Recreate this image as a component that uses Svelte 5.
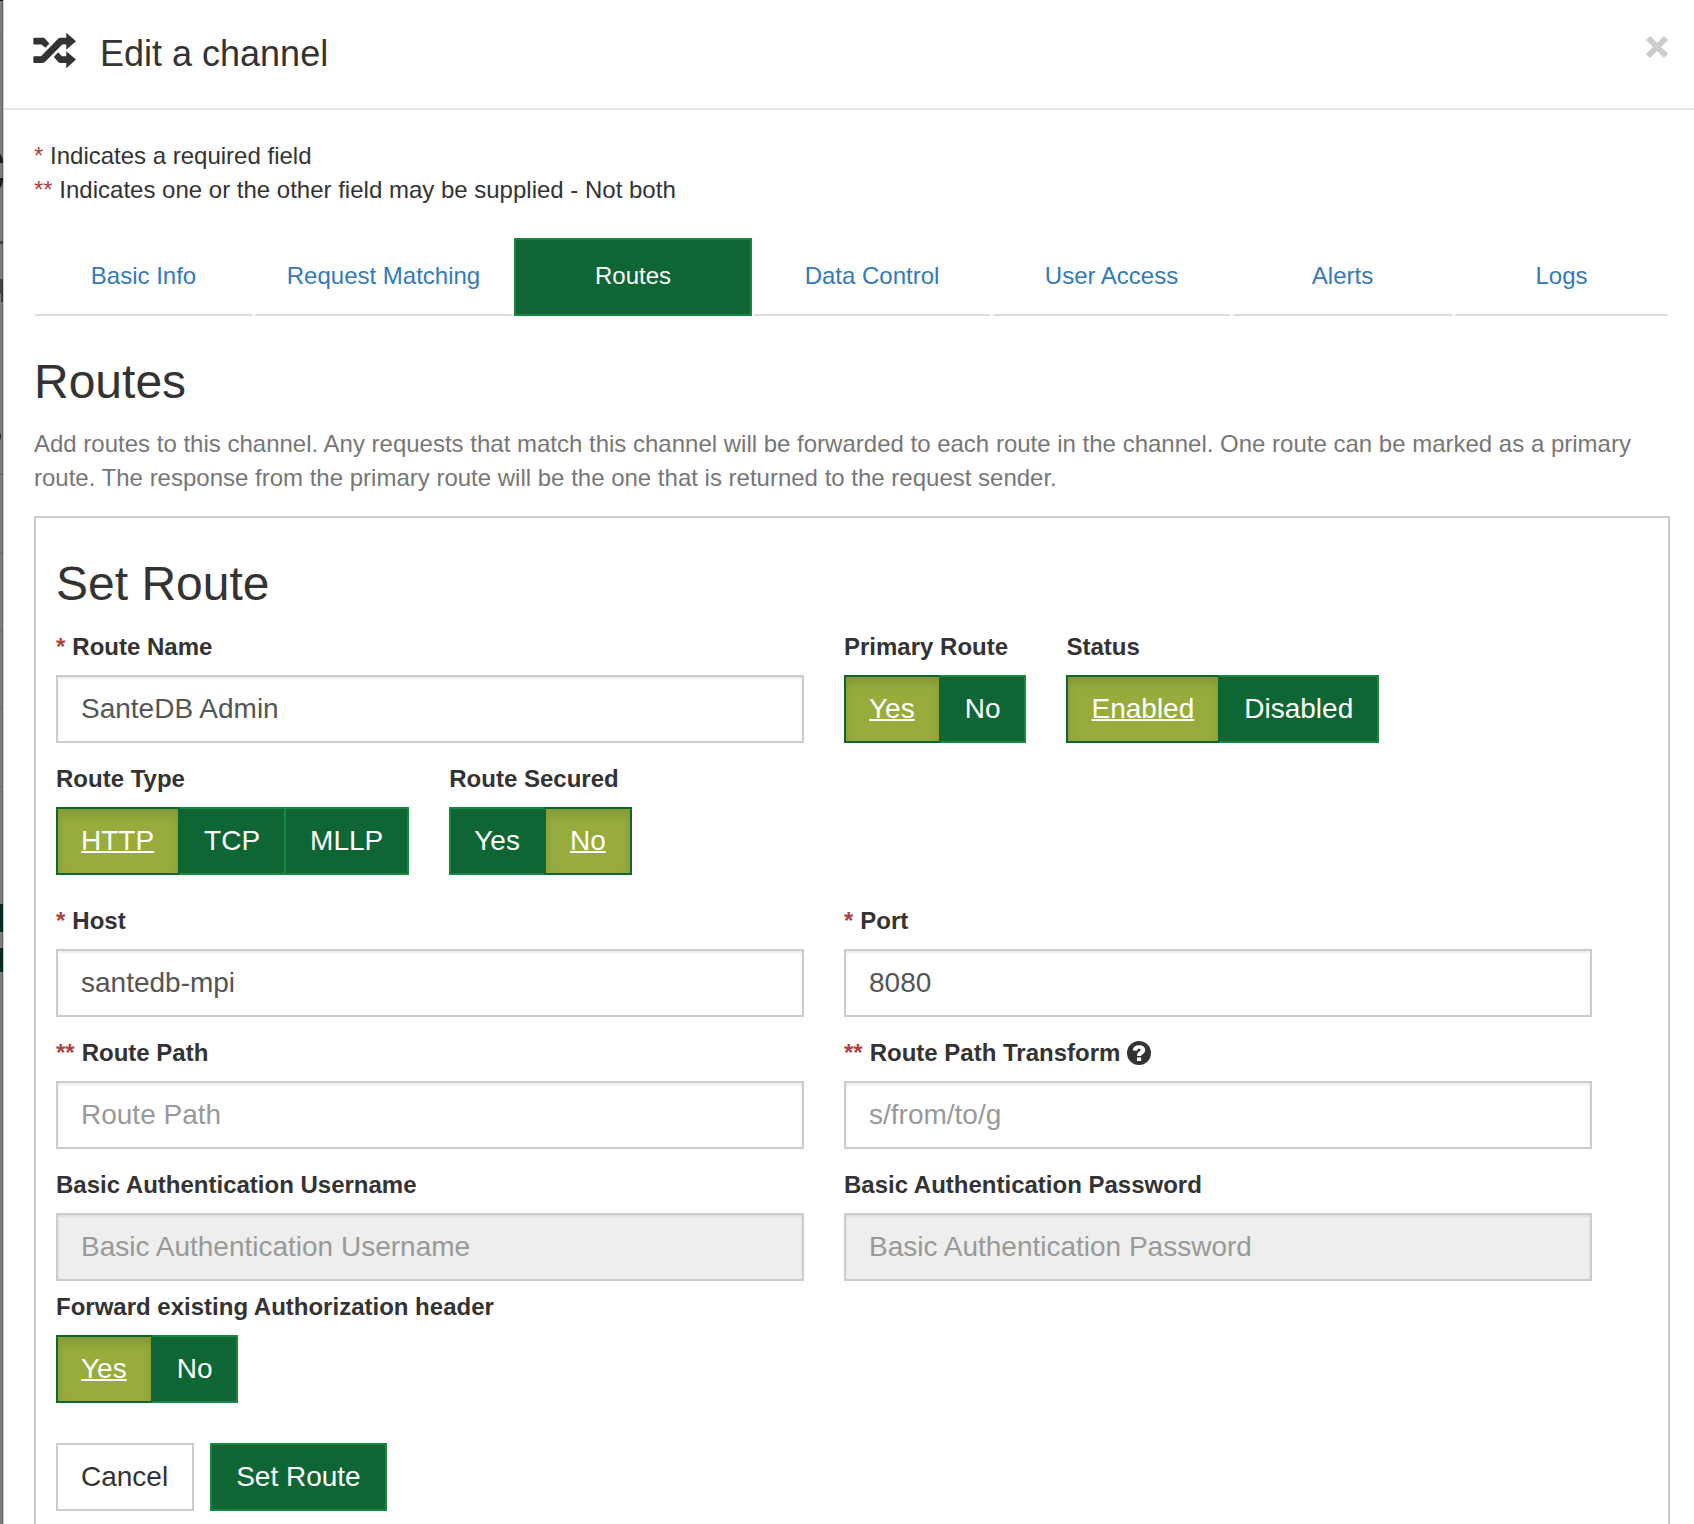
<script>
  const tabs = [
    { name: 'Basic Info' },
    { name: 'Request Matching' },
    { name: 'Routes' },
    { name: 'Data Control' },
    { name: 'User Access' },
    { name: 'Alerts' },
    { name: 'Logs' }
  ];
  let activeTab = $state('Routes');

  let route = $state({
    name: 'SanteDB Admin',
    primary: 'Yes',
    status: 'Enabled',
    type: 'HTTP',
    secured: 'No',
    host: 'santedb-mpi',
    port: '8080',
    path: '',
    pathTransform: '',
    username: '',
    password: '',
    forwardAuth: 'Yes'
  });
</script>

{#snippet choice(id, label, key, options)}
  <div class="field" role="group" aria-labelledby={id}>
    <span class="label" {id}>{label}</span>
    <div class="btn-group">
      {#each options as option}
        <button
          type="button"
          class="btn primary"
          class:active={route[key] === option}
          aria-pressed={route[key] === option}
          onclick={() => (route[key] = option)}>{option}</button>
      {/each}
    </div>
  </div>
{/snippet}

{#snippet text(id, label, key, mark, placeholder, disabled, help)}
  <div class="field">
    <label class="label" for={id}>
      {#if mark}<span class="mark">{mark}</span>{/if}
      {label}
      {#if help}
        <svg class="help" viewBox="0 0 24 24" role="img" aria-label="Help">
          <circle cx="12" cy="12" r="12" fill="#333" />
          <path d="M5.8 9.4C6 5.8 8.6 4.2 12.2 4.2c3.5 0 6 1.800 6 4.800 0 2.200-1.200 3.300-2.600 4.200-1 .6-1.500 1-1.500 1.900H10c0-2.400.7-3.400 2.300-4.500.9-.6 1.300-1 1.300-1.600 0-.8-.6-1.200-1.500-1.200-1.200 0-1.800.6-1.900 1.900z" fill="#fff" />
          <path d="M10 16.400h4.100v3.600H10z" fill="#fff" />
        </svg>
      {/if}
    </label>
    <input {id} type={key === 'password' ? 'password' : 'text'} {placeholder} {disabled} bind:value={route[key]} />
  </div>
{/snippet}

<div class="screen">
  <svg class="backdrop" viewBox="0 0 4 1524" preserveAspectRatio="xMinYMin slice" aria-hidden="true">
    <rect width="4" height="1524" fill="#7c7c7c" />
    <rect y="35" width="3" height="1" fill="#707070" />
    <path d="M0 0h3v1H0zM0 154q3 3 3 9H0zM0 178h3q0 7-3 10z" fill="#1c1c1c" />
    <path d="M0 241h3v3H0zM0 279h3v23H1v-8H0z" fill="#444" />
    <path d="M0 433q2 3 0 7z" fill="#1c1c1c" />
    <path d="M0 473h3v2H0zM0 552h3v1H0zM0 630h3v1H0zM0 708h3v1H0zM0 786h3v1H0z" fill="#6c6c6c" />
    <path d="M0 904h3v28H0zM0 948h3v24H0z" fill="#06301a" />
    <rect x="2" width="1" height="1524" fill="#000" opacity=".18" />
    <rect x="3" width="1" height="1524" fill="#ccc" />
  </svg>

  <main class="modal">
    <header>
      <svg class="shuffle" viewBox="38 38 128 104" aria-hidden="true">
        <path
          fill="#333"
          d="M42 52H71L87 69 75 82 63 72H42Q39 72 39 69V55Q39 52 42 52ZM42 107H62L112 56Q115 52 120 52H137V37L166 62.500 137 88V72H125L75 123Q71 127 66 127H42Q39 127 39 124V110Q39 107 42 107ZM113 95L124 107H137V92L166 117 137 143V127H119Q116 127 113 124L100 109Z"
        />
      </svg>
      <h1>Edit a channel</h1>
      <button type="button" class="close" aria-label="Close">
        <svg viewBox="0 0 24 24" aria-hidden="true">
          <path d="M3 3l18 18M21 3L3 21" stroke="#ccc" stroke-width="6" />
        </svg>
      </button>
    </header>

    <div class="body">
      <p class="notes">
        <span class="mark">*</span> Indicates a required field<br />
        <span class="mark">**</span> Indicates one or the other field may be supplied - Not both
      </p>

      <nav>
        {#each tabs as tab}
          <a
            href="#{tab.name}"
            class:active={activeTab === tab.name}
            aria-current={activeTab === tab.name ? 'page' : undefined}
            onclick={() => (activeTab = tab.name)}>{tab.name}</a>
        {/each}
      </nav>

      <h2>Routes</h2>
      <p class="intro">
        Add routes to this channel. Any requests that match this channel will be forwarded to each route in the
        channel. One route can be marked as a primary route. The response from the primary route will be the one that
        is returned to the request sender.
      </p>

      <form class="panel">
        <h2>Set Route</h2>
        <div class="row">
          {@render text('name', 'Route Name', 'name', '*', '', false, false)}
          <div class="inline">
            {@render choice('primary', 'Primary Route', 'primary', ['Yes', 'No'])}
            {@render choice('status', 'Status', 'status', ['Enabled', 'Disabled'])}
          </div>
        </div>
        <div class="inline types">
          {@render choice('type', 'Route Type', 'type', ['HTTP', 'TCP', 'MLLP'])}
          {@render choice('secured', 'Route Secured', 'secured', ['Yes', 'No'])}
        </div>
        <div class="row">
          {@render text('host', 'Host', 'host', '*', '', false, false)}
          {@render text('port', 'Port', 'port', '*', '', false, false)}
          {@render text('path', 'Route Path', 'path', '**', 'Route Path', false, false)}
          {@render text('transform', 'Route Path Transform', 'pathTransform', '**', 's/from/to/g', false, true)}
          {@render text('user', 'Basic Authentication Username', 'username', '', 'Basic Authentication Username', true, false)}
          {@render text('pass', 'Basic Authentication Password', 'password', '', 'Basic Authentication Password', true, false)}
        </div>
        <div class="inline forward">
          {@render choice('forward', 'Forward existing Authorization header', 'forwardAuth', ['Yes', 'No'])}
        </div>
        <div class="actions">
          <button type="button" class="btn">Cancel</button>
          <button type="button" class="btn primary">Set Route</button>
        </div>
      </form>
    </div>
  </main>
</div>

<style>
  :global(body) {
    margin: 0;
    background: #fff;
  }
  .screen,
  .screen * {
    box-sizing: border-box;
  }
  .screen {
    display: flex;
    height: 100vh;
    overflow: hidden;
    font: 24px/34px 'Liberation Sans', Arial, sans-serif;
    color: #333;
  }
  .backdrop {
    flex: none;
    width: 4px;
    height: 100%;
  }
  .modal {
    flex: 1;
    min-width: 0;
  }
  header {
    display: flex;
    align-items: flex-start;
    padding: 30px 25px 30px 29px;
    border-bottom: 2px solid #e5e5e5;
  }
  .shuffle {
    width: 43px;
    height: 35px;
    margin-top: 3px;
  }
  h1 {
    flex: 1;
    margin: 0 0 0 24px;
    font-size: 36px;
    font-weight: 400;
    line-height: 48px;
  }
  .close {
    display: flex;
    margin-top: 5px;
    padding: 0;
    border: 0;
    background: none;
  }
  .close svg {
    width: 24px;
    height: 24px;
  }
  .body {
    padding: 29px 24px 0 30px;
  }
  p {
    margin: 0;
  }
  .mark {
    color: #a94442;
  }
  nav {
    display: grid;
    grid-template-columns: 220fr 260fr 239fr 239fr 240fr 222fr 216fr;
    margin-top: 31px;
  }
  nav a {
    margin-right: 1px;
    padding: 19px 0 21px;
    border: 2px solid transparent;
    border-bottom-color: #ddd;
    color: #337ab7;
    text-align: center;
    text-decoration: none;
    white-space: nowrap;
  }
  nav a.active {
    border-color: #158940;
    background: #0e6635;
    color: #fff;
  }
  h2 {
    margin: 40px 0 20px;
    font-size: 48px;
    font-weight: 400;
    line-height: 52px;
  }
  .intro {
    margin-top: -1px;
    color: #777;
  }
  .panel {
    margin-top: 21px;
    padding: 0 76px 40px 20px;
    border: 2px solid #ccc;
  }
  .panel h2 {
    margin-bottom: 21px;
  }
  .row {
    display: grid;
    grid-template-columns: 1fr 1fr;
    gap: 20px 40px;
  }
  .inline {
    display: flex;
    gap: 40px;
  }
  .types {
    margin: 20px 0 30px;
  }
  .forward {
    margin-top: 10px;
  }
  .label {
    display: flex;
    align-items: center;
    gap: 7px;
    margin-bottom: 12px;
    font-weight: 700;
    line-height: 32px;
    white-space: nowrap;
  }
  .help {
    width: 24px;
    height: 24px;
  }
  input {
    display: block;
    width: 100%;
    height: 68px;
    padding: 0 23px;
    border: 2px solid #ccc;
    border-radius: 0;
    background: #fff;
    box-shadow: inset 0 2px 2px rgba(0, 0, 0, 0.08);
    color: #555;
    font: inherit;
    font-size: 28px;
  }
  input::placeholder {
    color: #999;
    opacity: 1;
  }
  input:disabled {
    background: #eee;
  }
  .btn-group {
    display: flex;
  }
  .btn {
    height: 68px;
    padding: 0 24px 0 23px;
    border: 2px solid #ccc;
    background: #fff;
    color: #333;
    font: inherit;
    font-size: 28px;
    white-space: nowrap;
  }
  .btn.primary {
    padding: 0 24px;
    border-color: #158940;
    background: #0e6635;
    color: #fff;
  }
  .btn-group .btn.primary:first-child {
    padding-left: 23px;
  }
  .btn-group .btn + .btn {
    margin-left: -2px;
  }
  .btn-group .btn.active {
    border-color: #0e6635;
    background: #97ac3d;
    box-shadow: inset 0 6px 10px rgba(0, 0, 0, 0.125);
    text-decoration: underline;
    text-decoration-thickness: 2px;
  }
  .btn-group .btn.active + .btn {
    border-left-color: #0e6635;
  }
  .actions {
    display: flex;
    gap: 16px;
    margin-top: 40px;
  }
</style>
